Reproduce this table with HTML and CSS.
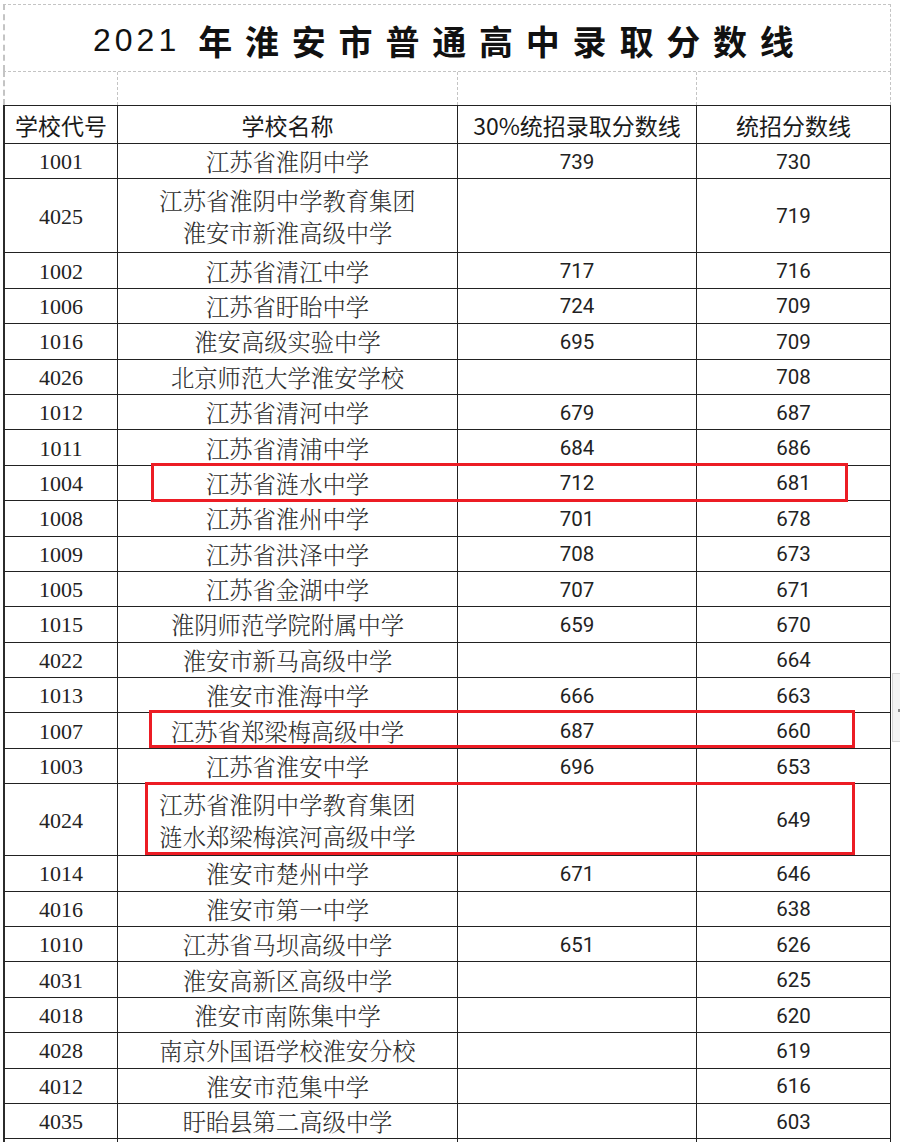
FILE: index.html
```html
<!DOCTYPE html>
<html lang="zh-CN">
<head>
<meta charset="utf-8">
<title>2021年淮安市普通高中录取分数线</title>
<link rel="stylesheet" href="styles.css">
</head>
<body>
<div class="page">
  <div class="sheet">
    <div class="title-row"><span class="yr">2021</span><span class="ttl-cn">年淮安市普通高中录取分数线</span></div>
    <div class="row spacer"><div class="c"></div><div class="c"></div><div class="c"></div><div class="c"></div></div>
    <div class="row head"><div class="c">学校代号</div><div class="c">学校名称</div><div class="c">30%统招录取分数线</div><div class="c">统招分数线</div></div>

    <div class="row"><div class="c code">1001</div><div class="c name">江苏省淮阴中学</div><div class="c num">739</div><div class="c num">730</div></div>
    <div class="row dbl-a"><div class="c code">4025</div><div class="c name">江苏省淮阴中学教育集团<br>淮安市新淮高级中学</div><div class="c num"></div><div class="c num">719</div></div>
    <div class="row"><div class="c code">1002</div><div class="c name">江苏省清江中学</div><div class="c num">717</div><div class="c num">716</div></div>
    <div class="row"><div class="c code">1006</div><div class="c name">江苏省盱眙中学</div><div class="c num">724</div><div class="c num">709</div></div>
    <div class="row"><div class="c code">1016</div><div class="c name">淮安高级实验中学</div><div class="c num">695</div><div class="c num">709</div></div>
    <div class="row"><div class="c code">4026</div><div class="c name">北京师范大学淮安学校</div><div class="c num"></div><div class="c num">708</div></div>
    <div class="row"><div class="c code">1012</div><div class="c name">江苏省清河中学</div><div class="c num">679</div><div class="c num">687</div></div>
    <div class="row"><div class="c code">1011</div><div class="c name">江苏省清浦中学</div><div class="c num">684</div><div class="c num">686</div></div>
    <div class="row"><div class="c code">1004</div><div class="c name">江苏省涟水中学</div><div class="c num">712</div><div class="c num">681</div></div>
    <div class="row"><div class="c code">1008</div><div class="c name">江苏省淮州中学</div><div class="c num">701</div><div class="c num">678</div></div>
    <div class="row"><div class="c code">1009</div><div class="c name">江苏省洪泽中学</div><div class="c num">708</div><div class="c num">673</div></div>
    <div class="row"><div class="c code">1005</div><div class="c name">江苏省金湖中学</div><div class="c num">707</div><div class="c num">671</div></div>
    <div class="row"><div class="c code">1015</div><div class="c name">淮阴师范学院附属中学</div><div class="c num">659</div><div class="c num">670</div></div>
    <div class="row"><div class="c code">4022</div><div class="c name">淮安市新马高级中学</div><div class="c num"></div><div class="c num">664</div></div>
    <div class="row"><div class="c code">1013</div><div class="c name">淮安市淮海中学</div><div class="c num">666</div><div class="c num">663</div></div>
    <div class="row"><div class="c code">1007</div><div class="c name">江苏省郑梁梅高级中学</div><div class="c num">687</div><div class="c num">660</div></div>
    <div class="row"><div class="c code">1003</div><div class="c name">江苏省淮安中学</div><div class="c num">696</div><div class="c num">653</div></div>
    <div class="row dbl-b"><div class="c code">4024</div><div class="c name">江苏省淮阴中学教育集团<br>涟水郑梁梅滨河高级中学</div><div class="c num"></div><div class="c num">649</div></div>
    <div class="row"><div class="c code">1014</div><div class="c name">淮安市楚州中学</div><div class="c num">671</div><div class="c num">646</div></div>
    <div class="row"><div class="c code">4016</div><div class="c name">淮安市第一中学</div><div class="c num"></div><div class="c num">638</div></div>
    <div class="row"><div class="c code">1010</div><div class="c name">江苏省马坝高级中学</div><div class="c num">651</div><div class="c num">626</div></div>
    <div class="row"><div class="c code">4031</div><div class="c name">淮安高新区高级中学</div><div class="c num"></div><div class="c num">625</div></div>
    <div class="row"><div class="c code">4018</div><div class="c name">淮安市南陈集中学</div><div class="c num"></div><div class="c num">620</div></div>
    <div class="row"><div class="c code">4028</div><div class="c name">南京外国语学校淮安分校</div><div class="c num"></div><div class="c num">619</div></div>
    <div class="row"><div class="c code">4012</div><div class="c name">淮安市范集中学</div><div class="c num"></div><div class="c num">616</div></div>
    <div class="row"><div class="c code">4035</div><div class="c name">盱眙县第二高级中学</div><div class="c num"></div><div class="c num">603</div></div>
    <div class="row"><div class="c code"></div><div class="c name"></div><div class="c num"></div><div class="c num"></div></div>
  </div>

  <div class="mark mark-1004"></div>
  <div class="mark mark-1007"></div>
  <div class="mark mark-4024"></div>

  <div class="side-tab"><span class="side-dot"></span></div>
</div>
</body>
</html>
```

FILE: styles.css
```css
html, body {
  margin: 0;
  padding: 0;
  background: #ffffff;
}
body {
  width: 900px;
  height: 1142px;
  overflow: hidden;
}
.page {
  position: relative;
  width: 900px;
  height: 1142px;
  padding: 4px 0 0 3px;
  box-sizing: border-box;
}
.sheet {
  width: 888px;
}

/* title band */
.title-row {
  box-sizing: border-box;
  height: 67px;
  border-top: 1px dashed #c4c4c4;
  border-left: 2px dashed #c4c4c4;
  border-right: 1px dashed #c4c4c4;
  display: flex;
  align-items: center;
  padding: 4px 0 0 88px;
  color: #111;
  white-space: nowrap;
}
.yr {
  font-family: "Liberation Sans", "DejaVu Sans", sans-serif;
  font-size: 32px;
  letter-spacing: 4px;
  margin-right: 18px;
}
.ttl-cn {
  font-family: "Noto Sans CJK SC", "Noto Sans CJK JP", sans-serif;
  font-weight: 700;
  font-size: 34px;
  letter-spacing: 12.8px;
}

/* grid rows */
.row {
  box-sizing: border-box;
  display: grid;
  grid-template-columns: 113px 340px 239px 194px;
  height: 35.4px;
  border-left: 2px solid #2b2b2b;
  border-bottom: 1px solid #222;
}
.c {
  box-sizing: border-box;
  border-right: 1px solid #222;
  display: flex;
  align-items: center;
  justify-content: center;
  text-align: center;
  white-space: nowrap;
}
.spacer {
  height: 34px;
  border-top: 1px dashed #c4c4c4;
  border-left: 2px dashed #c4c4c4;
  border-bottom: none;
}
.spacer .c {
  border-right: 1px dashed #c4c4c4;
}
.head {
  height: 39px;
  border-top: 1px solid #222;
  font-family: "Noto Sans CJK SC", "Noto Sans CJK JP", sans-serif;
  font-size: 23px;
  color: #1a1a1a;
}
.head .c {
  padding-top: 1px;
}
.dbl-a {
  height: 74px;
}
.dbl-b {
  height: 72px;
}

.code {
  font-family: "Liberation Serif", "DejaVu Serif", serif;
  font-size: 22px;
  color: #222;
  padding-top: 2px;
}
.name {
  font-family: "Noto Serif CJK SC", "Noto Sans CJK SC", "Noto Sans CJK JP", sans-serif;
  font-weight: 300;
  font-size: 23.3px;
  line-height: 32px;
  color: #2e2e2e;
}
.num {
  font-family: Roboto, "Liberation Sans", sans-serif;
  font-size: 20.5px;
  color: #222;
  padding-top: 1px;
}

/* red highlight frames overlaying rows */
.mark {
  position: absolute;
  box-sizing: border-box;
  border: 3px solid #ec1c24;
  pointer-events: none;
}
.mark-1004 {
  left: 151px;
  top: 463px;
  width: 697px;
  height: 39px;
}
.mark-1007 {
  left: 149px;
  top: 710px;
  width: 706px;
  height: 38px;
}
.mark-4024 {
  left: 145px;
  top: 782px;
  width: 710px;
  height: 73px;
}

/* clipped side panel at right edge */
.side-tab {
  position: absolute;
  left: 892px;
  top: 673px;
  width: 10px;
  height: 69px;
  box-sizing: border-box;
  background: #f3f3f3;
  border: 1px solid #d6d6d6;
}
.side-dot {
  position: absolute;
  left: 5px;
  top: 35px;
  width: 2px;
  height: 3px;
  background: #8a8a8a;
}
```
